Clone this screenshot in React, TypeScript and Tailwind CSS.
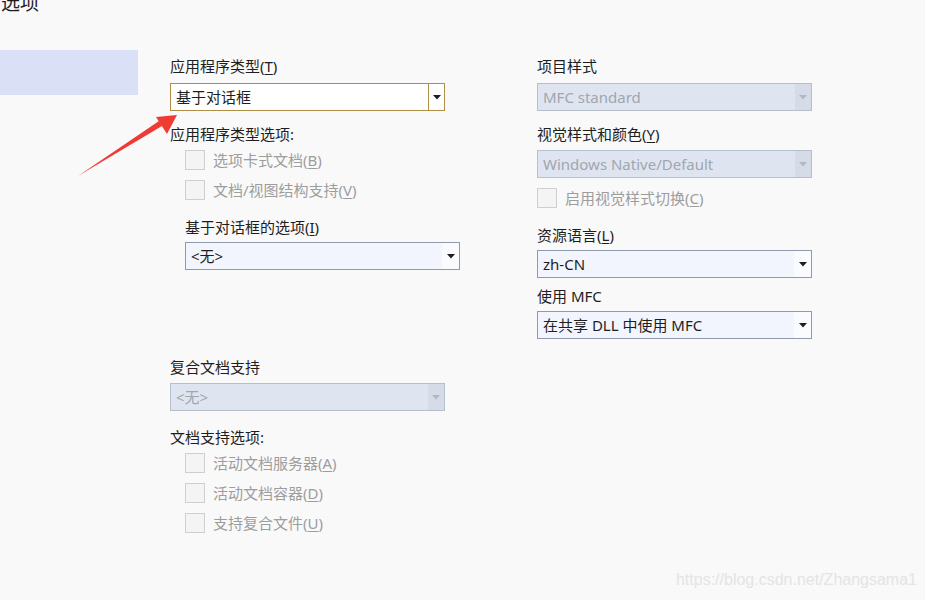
import React from "react";

const font = { fontFamily: '"Noto Sans", "Noto Sans CJK SC", sans-serif' };

function Arrow({ color }: { color: string }) {
  return (
    <svg width="8" height="5" viewBox="0 0 8 5">
      <path d="M0 0 L8 0 L4 4.5 Z" fill={color} />
    </svg>
  );
}

function Label({ children, className = "" }: { children: React.ReactNode; className?: string }) {
  return <div className={`h-[20px] leading-[20px] text-[15px] text-[#1e1e1e] ${className}`}>{children}</div>;
}

function U({ children }: { children: React.ReactNode }) {
  return <span className="underline underline-offset-[2px]">{children}</span>;
}

function Combo({
  text,
  kind,
  className = "",
  width = "w-[275px]",
}: {
  text: string;
  kind: "focus" | "normal" | "disabled";
  className?: string;
  width?: string;
}) {
  if (kind === "focus") {
    return (
      <div className={`flex h-[28px] ${width} border border-[#b08e45] bg-white ${className}`}>
        <div className="flex-1 flex items-center pl-[5px] text-[15px] text-[#1e1e1e]">{text}</div>
        <div className="w-[16px] border-l border-[#b08e45] flex items-center justify-center">
          <Arrow color="#1e1e1e" />
        </div>
      </div>
    );
  }
  if (kind === "normal") {
    return (
      <div className={`flex h-[28px] ${width} border border-[#8f9aad] bg-[#f2f5fd] ${className}`}>
        <div className="flex-1 flex items-center pl-[5px] text-[15px] text-[#1e1e1e]">{text}</div>
        <div className="w-[17px] bg-[#fafbfe] flex items-center justify-center">
          <Arrow color="#1e1e1e" />
        </div>
      </div>
    );
  }
  return (
    <div className={`flex h-[28px] ${width} border border-[#b7bfcd] bg-[#dee5f1] ${className}`}>
      <div className="flex-1 flex items-center pl-[5px] text-[15px] text-[#a2a6ad]">{text}</div>
      <div className="w-[16px] bg-[#d5dbe7] flex items-center justify-center">
        <Arrow color="#b3b8c1" />
      </div>
    </div>
  );
}

function Check({ children, className = "" }: { children: React.ReactNode; className?: string }) {
  return (
    <div className={`flex items-center h-[20px] ${className}`}>
      <div className="w-[20px] h-[20px] border border-[#cfcfcf] bg-[#f4f4f4]" />
      <div className="ml-[8px] text-[15px] text-[#9d9d9d] leading-[20px]">{children}</div>
    </div>
  );
}

export default function App() {
  return (
    <div className="relative w-[925px] h-[600px] overflow-hidden bg-[#f9f9f9]" style={font}>
      <div className="flex h-full">
        {/* sidebar */}
        <div className="w-[170px] shrink-0 flex flex-col">
          <div className="mt-[-9px] pl-[1px] text-[19px] leading-[24px] text-[#1e1e1e]">选项</div>
          <div className="mt-[35px] w-[138px] h-[45px] bg-[#dae0f6]" />
        </div>
        {/* left column */}
        <div className="w-[367px] shrink-0 flex flex-col pt-[56px]">
          <Label>
            应用程序类型(<U>T</U>)
          </Label>
          <Combo text="基于对话框" kind="focus" className="mt-[7px]" />
          <Label className="mt-[13px]">应用程序类型选项:</Label>
          <div className="pl-[15px] flex flex-col">
            <Check className="mt-[6px]">
              选项卡式文档(<U>B</U>)
            </Check>
            <Check className="mt-[10px]">
              文档/视图结构支持(<U>V</U>)
            </Check>
            <Label className="mt-[17px]">
              基于对话框的选项(<U>I</U>)
            </Label>
            <Combo text="<无>" kind="normal" className="mt-[5px]" />
          </div>
          <Label className="mt-[87px]">复合文档支持</Label>
          <Combo text="<无>" kind="disabled" className="mt-[6px]" />
          <Label className="mt-[16px]">文档支持选项:</Label>
          <div className="pl-[15px] flex flex-col">
            <Check className="mt-[6px]">
              活动文档服务器(<U>A</U>)
            </Check>
            <Check className="mt-[10px]">
              活动文档容器(<U>D</U>)
            </Check>
            <Check className="mt-[10px]">
              支持复合文件(<U>U</U>)
            </Check>
          </div>
        </div>
        {/* right column */}
        <div className="flex-1 flex flex-col pt-[56px]">
          <Label>项目样式</Label>
          <Combo text="MFC standard" kind="disabled" className="mt-[7px]" />
          <Label className="mt-[13px]">
            视觉样式和颜色(<U>Y</U>)
          </Label>
          <Combo text="Windows Native/Default" kind="disabled" className="mt-[6px]" />
          <Check className="mt-[10px]">
            启用视觉样式切换(<U>C</U>)
          </Check>
          <Label className="mt-[17px]">
            资源语言(<U>L</U>)
          </Label>
          <Combo text="zh-CN" kind="normal" className="mt-[5px]" />
          <Label className="mt-[8px]">使用 MFC</Label>
          <Combo text="在共享 DLL 中使用 MFC" kind="normal" className="mt-[5px]" />
        </div>
      </div>

      {/* red annotation arrow */}
      <svg className="absolute left-0 top-0 pointer-events-none" width="925" height="600">
        <path d="M78 176 L162 126 L159 121 Z" fill="#ee3b34" />
        <path d="M177 115 L156 117 L167 134 Z" fill="#ee3b34" />
      </svg>

      {/* watermark */}
      <div
        className="absolute right-[8px] bottom-[8px] text-[16px] text-[#e4e4e4]"
        style={{ fontFamily: '"Liberation Sans", Arial, sans-serif' }}
      >
        https://blog.csdn.net/Zhangsama1
      </div>
    </div>
  );
}
